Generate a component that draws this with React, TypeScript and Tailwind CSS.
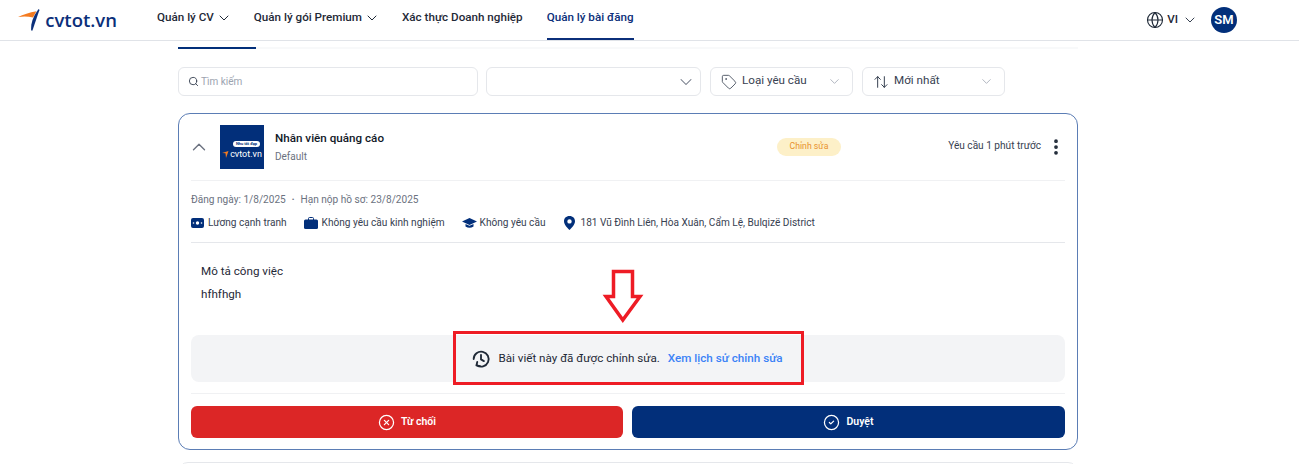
import {
  ArrowUpDown,
  ChevronDown,
  ChevronUp,
  CircleCheck,
  CircleX,
  EllipsisVertical,
  Globe,
  Search,
  Tag,
} from "lucide-react";

function Logo() {
  return (
    <div className="w-[99px] shrink-0 flex items-center">
      <svg width="23" height="24" viewBox="0 0 23 24" className="mr-[5px]">
        <path d="M0 9 Q8 5 19 3 L15.500 9.500 Q8 7.500 0 9Z" fill="#f47b20" />
        <path d="M21 1 Q22.200 .8 22 2 L15 22.500 Q14 23.800 13.500 22 Q13 12 21 1Z" fill="#0b2f7a" />
      </svg>
      <span className="text-[18.500px] leading-none font-semibold text-[#0b2f7a] font-['Open_Sans',sans-serif]">
        cvtot.vn
      </span>
    </div>
  );
}

function NavItem({ label, caret, active }: { label: string; caret?: boolean; active?: boolean }) {
  return (
    <div
      className={`h-[40px] pb-[2px] flex items-center gap-[2px] border-b-2 text-[11.650px] font-medium ${
        active ? "border-[#0b2f7a] text-[#0b2f7a]" : "border-transparent text-[#1f2937]"
      }`}
    >
      {label}
      {caret && <ChevronDown size={16} strokeWidth={1.5} className="mr-[-2px]" />}
    </div>
  );
}

function InfoItem({ icon, label }: { icon: React.ReactNode; label: string }) {
  return (
    <div className="flex items-center gap-[4px] text-[10.100px] text-[#374151]">
      {icon}
      <span>{label}</span>
    </div>
  );
}

function Filter({ icon, label }: { icon: React.ReactNode; label: string }) {
  return (
    <div className="w-[143px] h-[29px] border border-[#e5e7eb] rounded-md flex items-center pl-[10px] pr-[10px]">
      {icon}
      <span className="ml-[5px] pb-[1px] text-[11.650px] text-[#374151]">{label}</span>
      <ChevronDown size={15} strokeWidth={1.25} className="ml-auto text-[#9ca3af]" />
    </div>
  );
}

export default function App() {
  return (
    <div className="relative w-[1299px] h-[464px] overflow-hidden bg-white font-['Roboto',sans-serif]">
      <header className="h-[41px] border-b border-[#e0e3e8] flex items-center pl-[18px] pr-[62px]">
        <Logo />
        <nav className="ml-[40px] flex items-center gap-[24px]">
          <NavItem label="Quản lý CV" caret />
          <NavItem label="Quản lý gói Premium" caret />
          <NavItem label="Xác thực Doanh nghiệp" />
          <NavItem label="Quản lý bài đăng" active />
        </nav>
        <div className="ml-auto flex items-center">
          <Globe size={18} strokeWidth={1.5} className="text-[#1f2937]" />
          <span className="ml-[3px] text-[11.650px] font-medium text-[#1f2937]">VI</span>
          <ChevronDown size={16} strokeWidth={1.5} className="ml-[4px] text-[#374151]" />
          <div className="ml-[13px] w-[26px] h-[26px] rounded-full bg-[#022f7a] flex items-center justify-center text-white text-[13px] font-semibold">
            SM
          </div>
        </div>
      </header>

      <main className="w-[900px] ml-[178px] pt-[6px]">
        <div className="h-[2px] bg-[#f8f9fa]">
          <div className="w-[78px] h-[2px] bg-[#022f7a]" />
        </div>

        <div className="mt-[18px] flex items-center gap-[9px]">
          <div className="w-[300px] mr-[-1px] h-[29px] border border-[#e5e7eb] rounded-md flex items-center pl-[9px]">
            <Search size={11} strokeWidth={2} className="text-[#374151]" />
            <span className="ml-[2px] pb-[1px] text-[10px] text-[#9ca3af]">Tìm kiếm</span>
          </div>
          <div className="w-[215px] h-[29px] border border-[#e5e7eb] rounded-md flex items-center justify-end pr-[4px]">
            <ChevronDown size={20} strokeWidth={1.25} className="text-[#6b7280]" />
          </div>
          <Filter icon={<Tag size={16} strokeWidth={1.25} className="text-[#374151]" />} label="Loại yêu cầu" />
          <Filter icon={<ArrowUpDown size={16} strokeWidth={1.5} className="text-[#374151]" />} label="Mới nhất" />
        </div>

        <section className="mt-[17px] h-[337px] border border-[#5b7db5] rounded-xl px-[12px]">
          <div className="h-[67px] border-b border-[#f0f1f3] flex items-center">
            <div className="w-[586px] shrink-0 flex items-center">
              <ChevronUp size={22} strokeWidth={1.5} className="ml-[-3px] text-[#6b7280]" />
              <div className="ml-[10px] w-[44px] h-[44px] pt-[6px] bg-[#022f7a] flex flex-col items-center justify-center">
                <div className="ml-[9px] w-[27px] h-[6px] rounded-full bg-white flex items-center justify-center">
                  <span className="text-[4px] leading-none font-bold text-[#022f7a]">Nhu tốt đẹp</span>
                </div>
                <div className="mt-[3px] flex items-center gap-[1px]">
                  <svg width="7" height="9" viewBox="0 0 7 9">
                    <path d="M0 3 L6.500 1 L4 8 L3.500 3.200Z" fill="#f47b20" />
                  </svg>
                  <span className="text-[9px] leading-none text-white">cvtot.vn</span>
                </div>
              </div>
              <div className="ml-[11px] flex flex-col">
                <span className="text-[11.650px] leading-[18px] font-medium text-[#111827]">Nhân viên quảng cáo</span>
                <span className="mt-[1px] text-[10px] leading-[18px] text-[#6b7280]">Default</span>
              </div>
            </div>
            <span className="w-[64px] h-[18px] rounded-full bg-[#fdf0c8] flex items-center justify-center text-[8.700px] text-[#e8912d]">
              Chỉnh sửa
            </span>
            <span className="ml-auto pb-[2px] text-[10.100px] text-[#374151]">Yêu cầu 1 phút trước</span>
            <EllipsisVertical size={20} strokeWidth={2.5} className="ml-[5px] mr-[-1px] text-[#1f2937]" />
          </div>

          <div className="h-[62px] border-b border-[#e5e7eb] pt-[11px]">
            <div className="flex items-center gap-[6px] text-[10.100px] leading-[15px] text-[#6b7280]">
              <span>Đăng ngày: 1/8/2025</span>
              <span className="text-[8px]">•</span>
              <span>Hạn nộp hồ sơ: 23/8/2025</span>
            </div>
            <div className="mt-[8px] flex items-center gap-[17px]">
              <InfoItem
                icon={
                  <svg width="13" height="10" viewBox="0 0 13 10">
                    <rect width="13" height="10" rx="2" fill="#022f7a" />
                    <circle cx="6.500" cy="5" r="1.700" fill="#fff" />
                    <circle cx="2.500" cy="5" r="0.800" fill="#fff" />
                    <circle cx="10.500" cy="5" r="0.800" fill="#fff" />
                  </svg>
                }
                label="Lương cạnh tranh"
              />
              <InfoItem
                icon={
                  <svg width="14" height="12" viewBox="0 0 14 12">
                    <path d="M4.500 3V1.500Q4.500 .5 5.500 .5H8.500Q9.500 .5 9.500 1.500V3" fill="none" stroke="#022f7a" />
                    <rect y="2.500" width="14" height="9.500" rx="1.500" fill="#022f7a" />
                  </svg>
                }
                label="Không yêu cầu kinh nghiệm"
              />
              <InfoItem
                icon={
                  <svg width="15" height="12" viewBox="0 0 15 12" className="mr-[-1px]">
                    <path d="M7.500 1 L15 4.500 L7.500 8 L0 4.500Z" fill="#022f7a" />
                    <path d="M3.500 7 V9.500 Q7.500 12 11.500 9.500 V7 L7.500 8.800Z" fill="#022f7a" />
                  </svg>
                }
                label="Không yêu cầu"
              />
              <InfoItem
                icon={
                  <svg width="13" height="14" viewBox="0 0 13 14" className="ml-[1px]">
                    <path
                      fillRule="evenodd"
                      d="M6.500 0C10 0 12 2.500 12 5.200 12 8.500 8.500 12 6.500 14 4.500 12 1 8.500 1 5.200 1 2.500 3 0 6.500 0ZM6.500 3.200A2.200 2.200 0 1 0 6.500 7.600 2.200 2.200 0 1 0 6.500 3.200Z"
                      fill="#022f7a"
                    />
                  </svg>
                }
                label="181 Vũ Đình Liên, Hòa Xuân, Cẩm Lệ, Bulqizë District"
              />
            </div>
          </div>

          <div className="h-[92px] pt-[19px] pl-[10px] text-[11.650px] text-[#1f2937]">
            <p className="leading-[18px]">Mô tả công việc</p>
            <p className="mt-[5px] leading-[18px]">hfhfhgh</p>
          </div>

          <div className="h-[47px] rounded-lg bg-[#f3f4f6] flex items-center justify-center pr-[2px] text-[11.650px]">
            <svg width="20" height="20" viewBox="0 0 24 24" fill="none" stroke="#1f2937" strokeWidth="2.200" strokeLinecap="round" strokeLinejoin="round">
              <path d="M3.200 12 A9 9 0 1 1 7 19.500" />
              <path d="M7.500 15.500 L6.500 19.700 L10.800 20.500" />
              <path d="M12 7 V12.500 L15.500 14.500" />
            </svg>
            <span className="ml-[7px] text-[#1f2937]">Bài viết này đã được chỉnh sửa.</span>
            <span className="ml-[8px] font-medium text-[#3b82f6]">Xem lịch sử chỉnh sửa</span>
          </div>

          <div className="mt-[11px] border-t border-[#f0f1f3] pt-[12px] grid grid-cols-[432px_433px] gap-[9px]">
            <button className="h-[32px] rounded-md bg-[#dc2626] text-white text-[10.500px] font-semibold flex items-center justify-center gap-[6px]">
              <CircleX size={17} strokeWidth={1.75} />
              Từ chối
            </button>
            <button className="h-[32px] rounded-md bg-[#022f7a] text-white text-[10.500px] font-semibold flex items-center justify-center gap-[6px]">
              <CircleCheck size={17} strokeWidth={1.75} />
              Duyệt
            </button>
          </div>
        </section>

        <div className="mt-[12px] h-[20px] border border-[#e5e7eb] rounded-xl" />
      </main>

      {/* red annotation on top of the screenshot */}
      <div className="absolute left-[453px] top-[331px] w-[351px] h-[54px] border-[3px] border-[#ee1c25]" />
      <svg width="44" height="56" viewBox="0 0 44 56" className="absolute left-[601px] top-[269px]">
        <path d="M12.500 2.500H31.500V27.500H39L21.800 51L5 27.500H12.500Z" fill="#fff" stroke="#ee1c25" strokeWidth="3.500" />
      </svg>
    </div>
  );
}
